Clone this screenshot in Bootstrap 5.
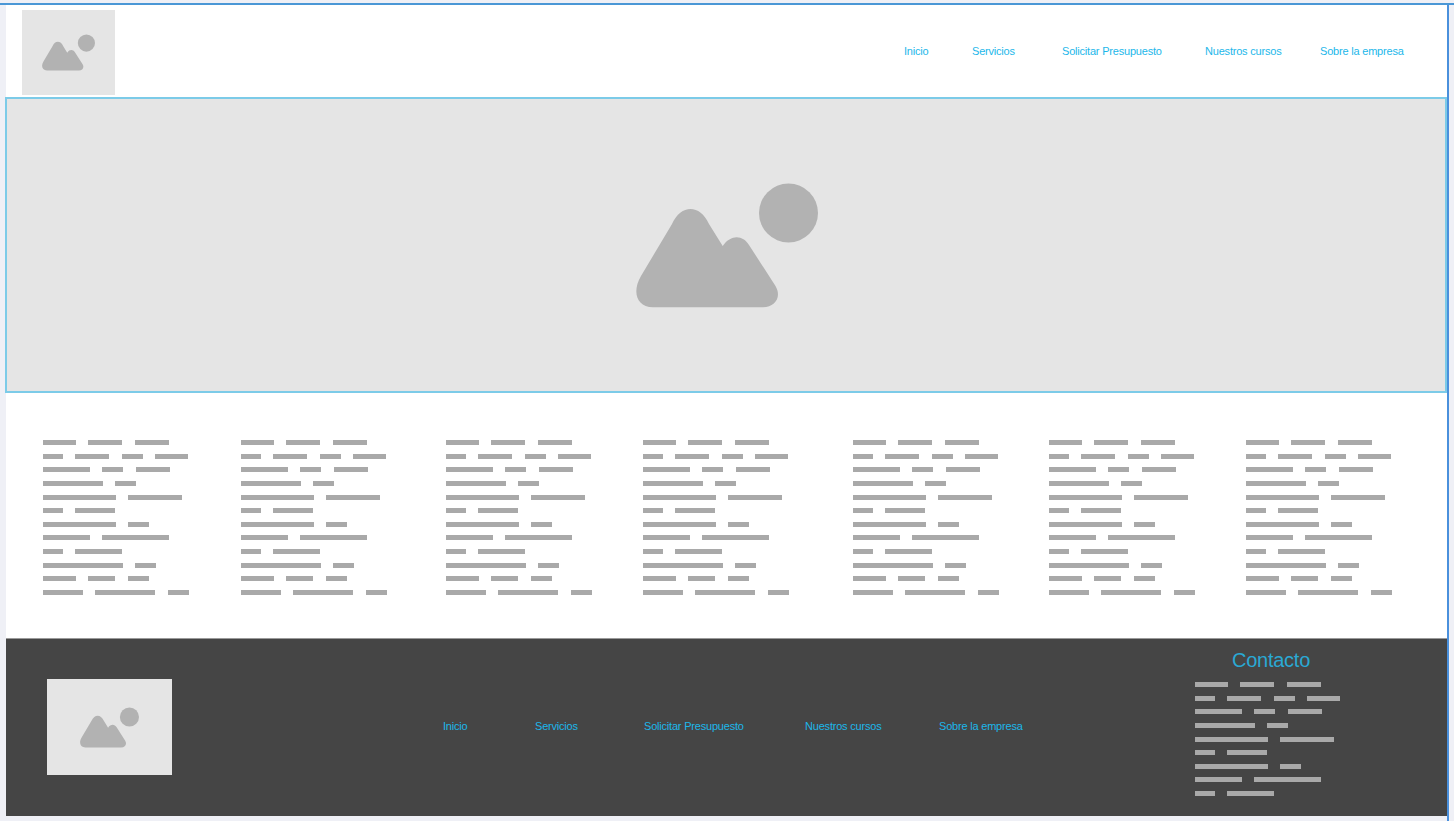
<!DOCTYPE html>
<html>
  <head>
    <meta charset="utf-8" />
    <meta name="viewport" content="width=device-width" />
    <title>Inicio</title>
    <link
      href="https://cdn.jsdelivr.net/npm/bootstrap@5.3.3/dist/css/bootstrap.min.css"
      rel="stylesheet"
    />
    <script src="https://cdn.jsdelivr.net/npm/bootstrap@5.3.3/dist/js/bootstrap.bundle.min.js"></script>

    <style>
      html,
      body {
        height: 821px;
        overflow: hidden;
      }

      body {
        background: #eff0f6;
        font-family: 'Liberation Sans', Arial, sans-serif;
        padding-top: 3px;
      }

      .top-rule {
        height: 2px;
        background: #4a97d6;
      }

      .page-frame {
        width: 1443px;
        height: 816px;
        margin-left: 6px;
        border-right: 2px solid #4a90dc;
      }

      .site-header {
        height: 92px;
        background: #fff;
        padding: 5px 0 0 16px;
      }

      .thumb {
        background: #e5e5e5;
      }

      .thumb-header {
        width: 93px;
        height: 85px;
      }

      .thumb-footer {
        width: 125px;
        height: 96px;
      }

      .header-links,
      .footer-links {
        display: grid;
        align-items: center;
      }

      .header-links {
        grid-template-columns: 68px 90px 143px 115px 83px;
        margin-right: 44px;
        margin-top: -5px;
      }

      .footer-links {
        grid-template-columns: 92px 109px 161px 134px 84px;
        margin-left: 271px;
        margin-top: -3px;
      }

      .site-link {
        color: #1cb7ea;
        font-size: 11px;
        letter-spacing: -0.2px;
        line-height: 14px;
        text-decoration: none;
        white-space: nowrap;
      }

      .hero {
        height: 296px;
        margin-left: -1px;
        background: #e5e5e5;
        border: 2px solid #7ccbe8;
      }

      .hero svg {
        margin-left: 2px;
      }

      .text-section {
        height: 245px;
        background: #fff;
        padding: 47px 0 0 37px;
        display: grid;
        grid-template-columns: 198px 205px 197px 210px 196px 197px 1fr;
      }

      .fake-line {
        display: flex;
        gap: 12.4px;
        height: 5px;
        margin-bottom: 8.64px;
      }

      .fake-word {
        background: #a9a9a9;
      }

      .site-footer {
        height: 178px;
        background: #454545;
        border-top: 1px solid #9a9a9a;
        padding-left: 41px;
        padding-bottom: 1px;
      }

      .contact-col {
        width: 152px;
        margin-left: auto;
        margin-right: 100px;
        padding-top: 9px;
      }

      .contact-title {
        color: #2aa9d4;
        font-size: 20px;
        font-weight: 400;
        letter-spacing: -0.25px;
        line-height: 24px;
        margin-bottom: 10px;
      }

      .icon-shape {
        fill: #b2b2b2;
      }
    </style>
  </head>

  <body>
    <svg width="0" height="0" class="d-block">
      <symbol id="imagePlaceholder" viewBox="0 0 182 125">
        <circle class="icon-shape" cx="152.5" cy="30" r="29.5" />
        <path
          class="icon-shape"
          d="M17 124.3H127C139 124.3 146 114 139.5 103L113 62C107 52 95 51 86.7 63L73 41C64 21 45 21 36 41L5 93C-4 108 0 124.3 17 124.3Z"
        />
      </symbol>
    </svg>

    <div class="top-rule"></div>

    <div class="page-frame">
      <header class="site-header d-flex align-items-start">
        <div class="thumb thumb-header d-flex align-items-center justify-content-center">
          <svg width="53" height="37"><use href="#imagePlaceholder" /></svg>
        </div>
        <nav class="header-links ms-auto align-self-center">
          <a class="site-link" href="#">Inicio</a>
          <a class="site-link" href="#">Servicios</a>
          <a class="site-link" href="#">Solicitar Presupuesto</a>
          <a class="site-link" href="#">Nuestros cursos</a>
          <a class="site-link" href="#">Sobre la empresa</a>
        </nav>
      </header>

      <section class="hero d-flex align-items-center justify-content-center">
        <svg width="182" height="125"><use href="#imagePlaceholder" /></svg>
      </section>

      <main class="text-section" id="textSection"></main>

      <footer class="site-footer d-flex align-items-center">
        <div class="thumb thumb-footer d-flex align-items-center justify-content-center">
          <svg width="59" height="41"><use href="#imagePlaceholder" /></svg>
        </div>
        <nav class="footer-links">
          <a class="site-link" href="#">Inicio</a>
          <a class="site-link" href="#">Servicios</a>
          <a class="site-link" href="#">Solicitar Presupuesto</a>
          <a class="site-link" href="#">Nuestros cursos</a>
          <a class="site-link" href="#">Sobre la empresa</a>
        </nav>
        <div class="contact-col align-self-start">
          <h2 class="contact-title text-center">Contacto</h2>
          <div id="contactLines"></div>
        </div>
      </footer>
    </div>

    <script>
      // word widths of the placeholder text, one array per line
      const lines = [
        [33, 34, 34],
        [20, 34, 21, 33],
        [47, 21, 34],
        [60, 21],
        [73, 54],
        [20, 40],
        [73, 21],
        [47, 67],
        [20, 47],
        [80, 21],
        [33, 27, 21],
        [40, 60, 21],
      ];

      function buildLines(container, rows) {
        rows.forEach(function (words) {
          const line = document.createElement('div');
          line.className = 'fake-line';
          words.forEach(function (width) {
            const word = document.createElement('div');
            word.className = 'fake-word';
            word.style.width = width + 'px';
            line.appendChild(word);
          });
          container.appendChild(line);
        });
      }

      const textSection = document.querySelector('#textSection');
      for (let i = 0; i < 7; i++) {
        const column = document.createElement('div');
        buildLines(column, lines);
        textSection.appendChild(column);
      }

      buildLines(document.querySelector('#contactLines'), lines.slice(0, 9));
    </script>
  </body>
</html>
